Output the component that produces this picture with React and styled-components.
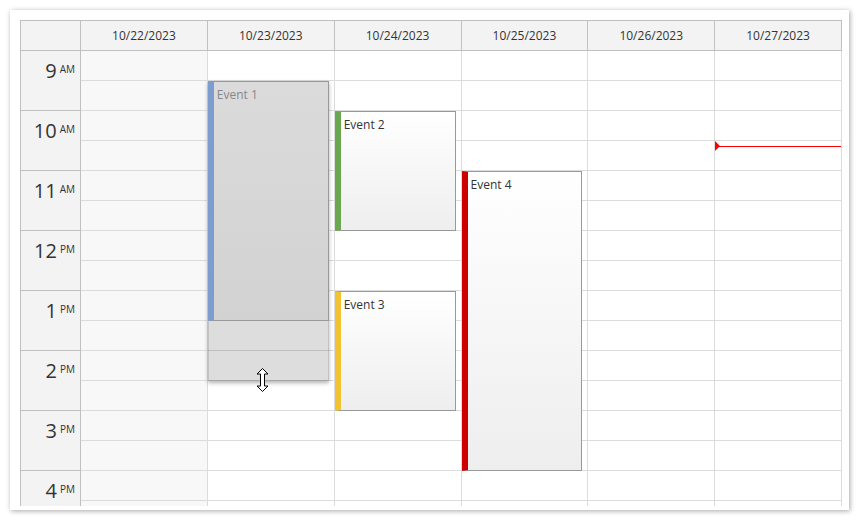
import React from 'react'
import styled, { createGlobalStyle } from 'styled-components'

const GlobalStyle = createGlobalStyle`
  html, body {
    margin: 0;
    padding: 0;
    background: #fff;
  }
  * {
    box-sizing: border-box;
  }
`

const DAYS = ['10/22/2023', '10/23/2023', '10/24/2023', '10/25/2023', '10/26/2023', '10/27/2023']
const HOURS = [
  ['9', 'AM'],
  ['10', 'AM'],
  ['11', 'AM'],
  ['12', 'PM'],
  ['1', 'PM'],
  ['2', 'PM'],
  ['3', 'PM'],
  ['4', 'PM'],
]

// minutes from 9:00, 1px per minute
const EVENTS = [
  { day: 1, text: 'Event 1', start: 30, end: 270, bar: '#7e9dcf', moving: true },
  { day: 2, text: 'Event 2', start: 60, end: 180, bar: '#6aa84f' },
  { day: 2, text: 'Event 3', start: 240, end: 360, bar: '#f1c232' },
  { day: 3, text: 'Event 4', start: 120, end: 420, bar: '#cc0000' },
]

const Card = styled.div`
  margin: 10px;
  width: 839px;
  height: 500px;
  padding: 10px 7px 5px 10px;
  background: #fff;
  box-shadow: 1px 1px 5px rgba(0, 0, 0, 0.35);
  font-family: 'Segoe UI', 'Open Sans', 'Noto Sans', sans-serif;
  color: #333;
`

const Calendar = styled.div`
  width: 822px;
  border-left: 1px solid #c0c0c0;
  border-top: 1px solid #c0c0c0;
  position: relative;
`

const Columns = styled.div`
  display: grid;
  grid-template-columns: 60px repeat(6, 1fr);
`

const HeaderCell = styled.div`
  height: 30px;
  background: #f3f3f3;
  border-right: 1px solid #c0c0c0;
  border-bottom: 1px solid #c0c0c0;
  display: flex;
  align-items: center;
  justify-content: center;
  font-size: 12px;
`

const Body = styled.div`
  height: 455px;
  overflow: hidden;
`

const TimeColumn = styled.div`
  background: #f3f3f3;
  border-right: 1px solid #c0c0c0;
  display: flex;
  flex-direction: column;
`

const HourCell = styled.div`
  height: 60px;
  flex: none;
  border-bottom: 1px solid #c0c0c0;
  text-align: right;
  padding: 8px 5px 0 0;
  font-size: 20px;
  line-height: 24px;
`

const Ampm = styled.span`
  font-size: 10px;
  vertical-align: top;
  line-height: 20px;
  margin-left: 3px;
`

const DayColumn = styled.div`
  position: relative;
  border-right: 1px solid #dcdcdc;
  background: ${(p) => (p.$weekend ? '#f8f8f8' : '#fff')};
  display: flex;
  flex-direction: column;
`

const HalfHour = styled.div`
  height: 30px;
  flex: none;
  border-bottom: 1px solid #dcdcdc;
`

const Event = styled.div`
  position: absolute;
  left: 0;
  width: calc(100% - 5px);
  border: 1px solid #999;
  border-left: 6px solid ${(p) => p.$bar};
  background: ${(p) =>
    p.$moving ? 'linear-gradient(#dbdbdb, #d2d2d2)' : 'linear-gradient(#fff, #eee)'};
  color: ${(p) => (p.$moving ? '#888' : '#333')};
  font-size: 12px;
  line-height: 16px;
  padding: 5px 0 0 3px;
  z-index: 2;
`

const ResizeShadow = styled.div`
  position: absolute;
  left: 0;
  width: calc(100% - 5px);
  background: rgba(0, 0, 0, 0.135);
  border: 1px solid rgba(0, 0, 0, 0.12);
  box-shadow: 0 2px 4px rgba(0, 0, 0, 0.3);
  z-index: 1;
`

const NowLine = styled.div`
  position: absolute;
  left: 0;
  right: 0;
  height: 1px;
  background: #ff0000;
  z-index: 3;

  &::before {
    content: '';
    position: absolute;
    left: 0;
    top: -5px;
    border-top: 5px solid transparent;
    border-bottom: 5px solid transparent;
    border-left: 5px solid #ff0000;
  }
`

const Cursor = styled.svg`
  position: absolute;
  z-index: 4;
  pointer-events: none;
`

const App = () => {
  return (
    <>
      <GlobalStyle />
      <Card>
        <Calendar>
          <Columns>
            <HeaderCell />
            {DAYS.map((d) => (
              <HeaderCell key={d}>{d}</HeaderCell>
            ))}
          </Columns>
          <Body>
            <Columns>
              <TimeColumn>
                {HOURS.map(([h, m]) => (
                  <HourCell key={h + m}>
                    {h}
                    <Ampm>{m}</Ampm>
                  </HourCell>
                ))}
              </TimeColumn>
              {DAYS.map((d, i) => (
                <DayColumn key={d} $weekend={i === 0}>
                  {Array.from({ length: 16 }).map((_, k) => (
                    <HalfHour key={k} />
                  ))}
                  {EVENTS.filter((e) => e.day === i).map((e) => (
                    <React.Fragment key={e.text}>
                      {e.moving && <ResizeShadow style={{ top: e.start, height: 300 }} />}
                      <Event
                        $bar={e.bar}
                        $moving={e.moving}
                        style={{ top: e.start, height: e.end - e.start }}
                      >
                        {e.text}
                      </Event>
                    </React.Fragment>
                  ))}
                  {i === 5 && <NowLine style={{ top: 95 }} />}
                </DayColumn>
              ))}
            </Columns>
          </Body>
          <Cursor
            width="13"
            height="24"
            viewBox="0 0 13 24"
            style={{ left: 235, top: 347 }}
          >
            <path
              d="M6.5 0.5 L12 6 L8.5 6 L8.5 18 L12 18 L6.5 23.5 L1 18 L4.5 18 L4.5 6 L1 6 Z"
              fill="#fff"
              stroke="#000"
              strokeWidth="1"
              strokeLinejoin="miter"
            />
          </Cursor>
        </Calendar>
      </Card>
    </>
  )
}

export default App
